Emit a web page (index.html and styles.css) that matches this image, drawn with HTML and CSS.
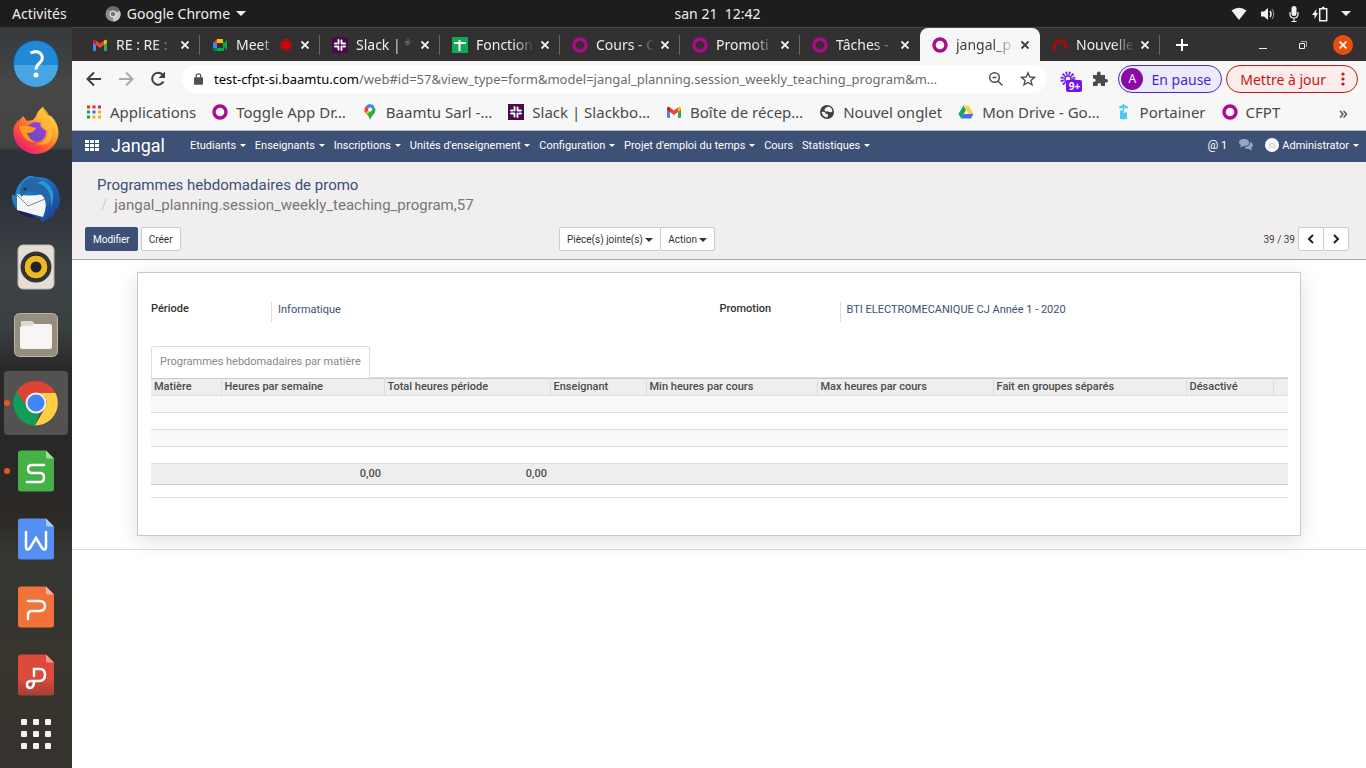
FILE: index.html
```html
<!DOCTYPE html>
<html lang="fr">
<head>
    <meta charset="UTF-8" />
    <title>jangal_planning.session_weekly_teaching_program,57</title>
    <link rel="stylesheet" href="styles.css">
</head>
<body>
<!-- Shared icons -->
<svg class="sprite" aria-hidden="true">
    <symbol id="i-close" viewBox="0 0 10 10"><path d="M1.5 1.5l7 7M8.500 1.500l-7 7" stroke="currentColor" stroke-width="1.8" fill="none" /></symbol>
    <symbol id="i-ring" viewBox="0 0 16 16"><circle cx="8" cy="8" r="6" fill="none" stroke="#ad0b8c" stroke-width="3.400" /></symbol>
    <symbol id="i-slack" viewBox="0 0 16 16">
        <path fill="#4a0a4b" d="M0 0h16v16H0z" />
        <g stroke="#fff" stroke-width="1.900" stroke-linecap="round"><path d="M6.500 3v3.500M3 6.500h1.500M9.500 3.500V6M9.500 6.500H13M9.500 13V9.500M13 9.500h-1.500M3 9.500h3.500M6.500 12.500V11" /></g>
    </symbol>
    <symbol id="i-gmail" viewBox="0 0 16 16">
        <path fill="#4285f4" d="M1 4.500V13a1 1 0 0 0 1 1h2V7z" />
        <path fill="#34a853" d="M15 4.500V13a1 1 0 0 1-1 1h-2V7z" />
        <path fill="#ea4335" d="M4 3.500L8 6.500l4-3V8l-4 3-4-3z" />
        <path fill="#c5221f" d="M1 4.500C1 2.500 3 2 4 3.500V8L1 5.500z" />
        <path fill="#fbbc04" d="M15 4.500C15 2.500 13 2 12 3.500V8l3-2.500z" />
    </symbol>
</svg>

<header class="topbar">
    <div class="topbar-left">
        <button class="plain">Activités</button>
        <button class="plain topbar-app">
            <svg width="16" height="16" viewBox="0 0 16 16"><circle cx="8" cy="8" r="7.500" fill="#8d8d8d" /><path d="M8 8L15 5a7.500 7.500 0 0 1-7 10.500z" fill="#c9c9c9" /><path d="M1.500 4A7.500 7.500 0 0 1 15 5H8z" fill="#6d6d6d" /><circle cx="8" cy="8" r="3.500" fill="#ddd" /><circle cx="8" cy="8" r="2.300" fill="#777" /></svg>
            Google Chrome
            <span class="caret caret-big"></span>
        </button>
    </div>
    <button class="plain topbar-clock">san 21&nbsp; 12:42</button>
    <div class="topbar-right">
        <svg width="16" height="16" viewBox="0 0 16 16"><path fill="#f2f2f2" d="M.5 4.500Q8-1 15.500 4.500L8 14z" /></svg>
        <svg width="16" height="16" viewBox="0 0 16 16"><path fill="#f2f2f2" d="M1 5.500h3L8 2v12l-4-3.500H1z" /><path d="M10 5q2 3 0 6" stroke="#f2f2f2" stroke-width="1.500" fill="none" /><path d="M12 3q3.500 5 0 10" stroke="#999" fill="none" /></svg>
        <svg width="10" height="16" viewBox="0 0 10 16"><rect x="2.500" y="0" width="5" height="10" rx="2.500" fill="#f2f2f2" /><path d="M1 6v2q0 4 4 4t4-4V6M5 12v4M2.500 15.500h5" stroke="#f2f2f2" stroke-width="1.200" fill="none" /></svg>
        <svg width="16" height="16" viewBox="0 0 16 16"><path fill="#f2f2f2" d="M4.500 3L0 9h2.500v4L6 7H4z" /><path d="M7.700 2.700h7v12h-7zM10 1.500h2.500" stroke="#f2f2f2" stroke-width="1.500" fill="none" /></svg>
        <span class="caret caret-big"></span>
    </div>
</header>

<div class="desktop">
    <nav class="dock" aria-label="Applications">
        <a href="#" class="dock-item" title="Aide">
            <svg viewBox="0 0 48 48"><circle cx="24" cy="24" r="22.500" fill="#2288d8" stroke="#1a568a" /><path d="M2 26h44a22 22 0 0 1-44 0z" fill="#48a5e4" /><path d="M18.500 14q6-3 10 .5 4 4.500-.5 9-4 3.500-4 7" stroke="#fff" stroke-width="3" fill="none" /><circle cx="24" cy="36" r="2.500" fill="#fff" /></svg>
        </a>
        <a href="#" class="dock-item" title="Firefox">
            <svg viewBox="0 0 48 48">
                <defs>
                    <linearGradient id="fx" x1="1" y1="0" x2=".2" y2="1"><stop offset="0" stop-color="#fff14a" /><stop offset=".4" stop-color="#ffa62e" /><stop offset=".7" stop-color="#ff5038" /><stop offset="1" stop-color="#e31587" /></linearGradient>
                    <linearGradient id="fxg" x1="1" y1="0" x2="0" y2="1"><stop offset="0" stop-color="#a53be8" /><stop offset="1" stop-color="#5a50b0" /></linearGradient>
                </defs>
                <path fill="url(#fx)" d="M11 9l4 5 6-1 3-4q2-6 7-9 1 6 5 9 2-1 3 0 8 8 7.500 18A22.500 22.500 0 0 1 24 47 22.500 22.500 0 0 1 2 19l3-4v-2q1 0 1 2z" />
                <circle cx="24" cy="25" r="10" fill="url(#fxg)" />
                <path fill="#ffbd38" d="M24 13q6-3 9 3-4-1-5 2 5 8 9 4-2 14-13 15 16 4 17-13Q41 10 31 0q-3 3-7 13z" opacity=".8" />
                <path fill="#ff9a20" d="M7 19q8-1 17 2-2 5-9 5 2 7 9 9-13 1-17-16z" />
            </svg>
        </a>
        <a href="#" class="dock-item" title="Thunderbird">
            <svg viewBox="0 0 48 48">
                <defs><linearGradient id="tb" x1="0" y1="0" x2="1" y2="1"><stop offset="0" stop-color="#2b9bd8" /><stop offset=".5" stop-color="#1f66bd" /><stop offset="1" stop-color="#1c3c8c" /></linearGradient></defs>
                <path fill="url(#tb)" d="M10 6q8-8 13-4Q45 1 48 23q0 8-3 12l-1-2q-1 6-5 10l-1-2q-2 4-8 6l-2-4-18-4Q-1 31 0 19l3 2q1-9 7-15z" />
                <path fill="#2a1860" d="M5 34q6 10 19 8l-6-3z" />
                <path fill="#f4f5f7" d="M5 19q10 3 27 0 4 12-1 23L5 35z" />
                <path d="M5 20l11 11 17-7" stroke="#888" stroke-width="1" fill="none" />
                <path fill="#2466ac" d="M9 22Q5 8 18 3q17-2 22 20l-6 10q1-12-8-15-8-3-14 1z" />
                <path fill="#2a9bd0" d="M24 8q16 2 15 24 7-18-8-26z" />
                <circle cx="13" cy="14" r="1.500" fill="#333" />
            </svg>
        </a>
        <a href="#" class="dock-item" title="Rhythmbox">
            <svg viewBox="0 0 48 48"><rect x="6" y="2" width="36" height="44" rx="5" fill="#e4ded6" stroke="#bdb5aa" /><circle cx="24" cy="24" r="15.500" fill="#36343b" /><circle cx="24" cy="24" r="12" fill="#ecb91f" stroke="#171717" /><circle cx="24" cy="24" r="5.500" fill="#222" /></svg>
        </a>
        <a href="#" class="dock-item" title="Fichiers">
            <svg viewBox="0 0 48 48"><rect x="2.500" y="2.500" width="43" height="43" rx="5" fill="#968e7e" stroke="#bdb5a3" /><path fill="#ded8cb" d="M9 10h11l4 4v6H9z" /><path fill="#f7f6f4" d="M8 17q0-2 2-2h9l3-2h16q2 0 2 2v21q0 2-2 2H10q-2 0-2-2z" /></svg>
        </a>
        <a href="#" class="dock-item active running" title="Google Chrome">
            <svg viewBox="0 0 48 48"><path fill="#dd4437" d="M4.500 12.500A22.500 22.500 0 0 1 43.500 14H24a10 10 0 0 0-9 14z" /><path fill="#109d58" d="M4.500 12.500L15.500 29A10 10 0 0 0 28 33l-5 13.500A22.500 22.500 0 0 1 4.500 12.500z" /><path fill="#ffcd41" d="M43.500 14A22.500 22.500 0 0 1 23 46.500L33 29a10 10 0 0 0-6-15z" /><circle cx="24" cy="24" r="10.500" fill="#f1f1f1" /><circle cx="24" cy="24" r="8.500" fill="#4285f4" /></svg>
        </a>
        <a href="#" class="dock-item running" title="WPS Spreadsheets">
            <svg viewBox="0 0 48 48"><path fill="#46b147" d="M9 3.500h25l8 8V42q0 2.500-3 2.500H9Q6 44.500 6 42V6q0-2.500 3-2.500z" /><path fill="#a5d9a2" d="M34 3.500l8 8h-6q-2 0-2-2z" /><path d="M32 18H20q-4 0-4 4t4 4h8q4 0 4 4.500t-4 4.500H15" stroke="#fff" stroke-width="2.500" stroke-linecap="round" fill="none" /></svg>
        </a>
        <a href="#" class="dock-item" title="WPS Writer">
            <svg viewBox="0 0 48 48"><path fill="#558ff2" d="M9 3.500h25l8 8V42q0 2.500-3 2.500H9Q6 44.500 6 42V6q0-2.500 3-2.500z" /><path fill="#abcafa" d="M34 3.500l8 8h-6q-2 0-2-2z" /><path d="M14 17v14q0 6 4 2l6-10 6 10q4 4 4-2V17" stroke="#fff" stroke-width="2.500" stroke-linecap="round" fill="none" /></svg>
        </a>
        <a href="#" class="dock-item" title="WPS Presentation">
            <svg viewBox="0 0 48 48"><path fill="#f37239" d="M9 3.500h25l8 8V42q0 2.500-3 2.500H9Q6 44.500 6 42V6q0-2.500 3-2.500z" /><path fill="#f9b79a" d="M34 3.500l8 8h-6q-2 0-2-2z" /><path d="M16 18h11q6 0 6 5t-6 5h-7q-4 0-4 4v4" stroke="#fff" stroke-width="2.500" stroke-linecap="round" fill="none" /></svg>
        </a>
        <a href="#" class="dock-item" title="WPS PDF">
            <svg viewBox="0 0 48 48">
                <defs><linearGradient id="pdf" x1="0" y1="0" x2="0" y2="1"><stop offset=".6" stop-color="#db4a3b" /><stop offset="1" stop-color="#a33f35" /></linearGradient></defs>
                <path fill="url(#pdf)" d="M9 3.500h25l8 8V42q0 2.500-3 2.500H9Q6 44.500 6 42V6q0-2.500 3-2.500z" /><path fill="#ee988e" d="M34 3.500l8 8h-6q-2 0-2-2z" /><path d="M22 25v-7h6q5 0 5 6t-6 6h-8q-4 0-4 3.500t3 3.500q4 0 4-7" stroke="#fff" stroke-width="2.500" stroke-linecap="round" fill="none" />
            </svg>
        </a>
        <a href="#" class="dock-item dock-grid" title="Afficher les applications">
            <svg viewBox="0 0 30 30" fill="#f1f1ee"><rect width="6" height="6" rx="1" /><rect x="12" width="6" height="6" rx="1" /><rect x="24" width="6" height="6" rx="1" /><rect y="12" width="6" height="6" rx="1" /><rect x="12" y="12" width="6" height="6" rx="1" /><rect x="24" y="12" width="6" height="6" rx="1" /><rect y="24" width="6" height="6" rx="1" /><rect x="12" y="24" width="6" height="6" rx="1" /><rect x="24" y="24" width="6" height="6" rx="1" /></svg>
        </a>
    </nav>

    <div class="browser">
        <div class="tabs">
            <div class="tab"><svg class="ico"><use href="#i-gmail" /></svg><span class="tab-title">RE : RE :</span><button class="tab-close" aria-label="Fermer"><svg><use href="#i-close" /></svg></button></div>
            <div class="tab"><svg class="ico" viewBox="0 0 16 16"><path fill="#fbbc04" d="M5 2h6v4H5z" /><path fill="#ea4335" d="M5 2v4H1z" /><path fill="#4285f4" d="M1 6h4v5H1z" /><path fill="#00832d" d="M1 11h4v3H2q-1 0-1-1z" /><path fill="#00ac47" d="M5 11h6V5q1 0 1 1l3-3v10l-3-3v3q0 1-1 1H5z" /></svg><span class="tab-title">Meet</span><svg class="rec" viewBox="0 0 12 12"><circle cx="6" cy="6" r="5.500" fill="none" stroke="#d00" /><circle cx="6" cy="6" r="4" fill="#e00000" /></svg><button class="tab-close" aria-label="Fermer"><svg><use href="#i-close" /></svg></button></div>
            <div class="tab"><svg class="ico"><use href="#i-slack" /></svg><span class="tab-title">Slack | *</span><button class="tab-close" aria-label="Fermer"><svg><use href="#i-close" /></svg></button></div>
            <div class="tab"><svg class="ico" viewBox="0 0 16 16"><rect width="16" height="16" rx="1" fill="#0fa958" /><path d="M2 6h12M7.500 3v11" stroke="#fff" stroke-width="2" /></svg><span class="tab-title">Fonction</span><button class="tab-close" aria-label="Fermer"><svg><use href="#i-close" /></svg></button></div>
            <div class="tab"><svg class="ico"><use href="#i-ring" /></svg><span class="tab-title">Cours - C</span><button class="tab-close" aria-label="Fermer"><svg><use href="#i-close" /></svg></button></div>
            <div class="tab"><svg class="ico"><use href="#i-ring" /></svg><span class="tab-title">Promoti</span><button class="tab-close" aria-label="Fermer"><svg><use href="#i-close" /></svg></button></div>
            <div class="tab last"><svg class="ico"><use href="#i-ring" /></svg><span class="tab-title">Tâches -</span><button class="tab-close" aria-label="Fermer"><svg><use href="#i-close" /></svg></button></div>
            <div class="tab current"><svg class="ico"><use href="#i-ring" /></svg><span class="tab-title">jangal_p</span><button class="tab-close" aria-label="Fermer"><svg><use href="#i-close" /></svg></button></div>
            <div class="tab"><svg class="ico" viewBox="0 0 16 16"><path d="M2 13V10a6 6 0 0 1 12 0v3" fill="none" stroke="#b40606" stroke-width="3.500" stroke-dasharray="3.200 .8" /></svg><span class="tab-title">Nouvelle</span><button class="tab-close" aria-label="Fermer"><svg><use href="#i-close" /></svg></button></div>
            <button class="new-tab" aria-label="Nouvel onglet"><svg viewBox="0 0 12 12"><path d="M6 0v12M0 6h12" stroke="#fff" stroke-width="2" /></svg></button>
            <div class="window-buttons">
                <button aria-label="Réduire"><svg width="10" height="10" viewBox="0 0 10 10"><path d="M1 8.500h8" stroke="#eee" /></svg></button>
                <button aria-label="Restaurer"><svg width="10" height="10" viewBox="0 0 10 10"><path d="M1.500 3.500h5v5h-5z" stroke="#eee" fill="none" /><path d="M3 1.500h5.500V7" stroke="#aaa" fill="none" /></svg></button>
                <button class="window-close" aria-label="Fermer"><svg width="10" height="10"><use href="#i-close" /></svg></button>
            </div>
        </div>

        <div class="toolbar">
            <button class="tool" aria-label="Retour"><svg viewBox="0 0 16 16"><path d="M15 8H2M8 1.500L1.500 8 8 14.500" stroke="#3c4043" stroke-width="2" fill="none" /></svg></button>
            <button class="tool" aria-label="Avancer"><svg viewBox="0 0 16 16"><path d="M1 8h13M8 1.500L14.500 8 8 14.500" stroke="#aaa" stroke-width="2" fill="none" /></svg></button>
            <button class="tool" aria-label="Actualiser"><svg viewBox="0 0 16 16"><path d="M13.500 10.500a6 6 0 1 1-1-7L14 5" stroke="#3c4043" stroke-width="2" fill="none" /><path d="M15 .5V7H8.500z" fill="#3c4043" /></svg></button>
            <div class="omnibox">
                <svg class="lock" viewBox="0 0 10 13"><path fill="#4d5156" d="M1 4.500h8q1 0 1 1V12q0 1-1 1H1q-1 0-1-1V5.500q0-1 1-1z" /><path d="M2.500 5V3q0-2.300 2.500-2.300T7.500 3v2" stroke="#4d5156" stroke-width="1.400" fill="none" /></svg>
                <label for="url">test-cfpt-si.baamtu.com</label>
                <input id="url" type="text" value="/web#id=57&amp;view_type=form&amp;model=jangal_planning.session_weekly_teaching_program&amp;m…" />
                <button class="in-box" aria-label="Zoom"><svg viewBox="0 0 16 16"><circle cx="6.500" cy="6.500" r="4.800" stroke="#4d5156" stroke-width="1.500" fill="none" /><path d="M10 10l4.500 4.500M4.500 6.500h4" stroke="#4d5156" stroke-width="1.500" /></svg></button>
                <button class="in-box" aria-label="Favori"><svg viewBox="0 0 16 16"><path d="M8 1.800l1.800 4.200 4.600.4-3.500 3 1.100 4.500L8 11.500l-4 2.400 1.100-4.500-3.500-3 4.600-.4z" stroke="#4d5156" stroke-width="1.400" fill="none" /></svg></button>
            </div>
            <button class="ext" aria-label="Extension"><svg viewBox="0 0 16 16"><circle cx="8" cy="8" r="5.500" fill="none" stroke="#7a22f0" stroke-width="4" stroke-dasharray="1.700 1.180" /><circle cx="8" cy="8" r="3" fill="none" stroke="#7a22f0" stroke-width="1.500" /></svg><span class="ext-badge">9+</span></button>
            <button class="ext" aria-label="Extensions"><svg viewBox="0 0 16 16"><path fill="#4a4a4a" d="M1 4h4q-.5-3.500 1.800-3.500T8.500 4H13v4q3-.5 3 1.700T13 11.500V15H9q.2-3-1.700-3T5.500 15H1v-4q2.800 0 2.800-1.700T1 7.500z" /></svg></button>
            <button class="profile"><span class="profile-pic">A</span>En pause</button>
            <button class="update">Mettre à jour<svg viewBox="0 0 4 14" fill="#c5160f"><circle cx="2" cy="2" r="1.600" /><circle cx="2" cy="7" r="1.600" /><circle cx="2" cy="12" r="1.600" /></svg></button>
        </div>

        <div class="bookmarks">
            <a href="#"><svg class="ico" viewBox="0 0 16 16"><path fill="#ea2a1f" d="M1 1.500h3v3H1zM6.500 1.500h3v3h-3zM12 1.500h3v3h-3z" /><path fill="#12a150" d="M1 6.500h3v3H1zM1 11.500h3v3H1z" /><path fill="#4460e8" d="M6.500 6.500h3v3h-3z" /><path fill="#f5b400" d="M12 6.500h3v3h-3zM6.500 11.500h3v3h-3zM12 11.500h3v3h-3z" /></svg>Applications</a>
            <a href="#"><svg class="ico"><use href="#i-ring" /></svg>Toggle App Dr…</a>
            <a href="#"><svg class="ico" viewBox="0 0 16 16"><path fill="#34a853" d="M3.500 9L12 3q1.500 1 1.500 3 0 2.500-2.500 5-2 2-3 5-1.500-5-4.500-7z" /><path fill="#fbbc04" d="M3 7.500l5-4 2 3-5.500 4q-1.500-1.500-1.500-3z" /><path fill="#ea4335" d="M4 2l4 3-5 4Q1.500 5 4 2z" /><path fill="#4285f4" d="M4 2q2-2 4-2 3 0 4.500 2.500L8 6z" /><circle cx="8" cy="5.500" r="2" fill="#fff" /></svg>Baamtu Sarl -…</a>
            <a href="#"><svg class="ico"><use href="#i-slack" /></svg>Slack | Slackbo…</a>
            <a href="#"><svg class="ico"><use href="#i-gmail" /></svg>Boîte de récep…</a>
            <a href="#"><svg class="ico" viewBox="0 0 16 16"><circle cx="8" cy="8" r="7" fill="#3c4043" /><path fill="#f7f7f7" d="M2.500 8q3-1 4 1t2 1 0 3.500Q3.500 13 2.500 8zM8 3q4-1 5.500 4-1 2-3 1t-3.500-.5T5.500 5z" /></svg>Nouvel onglet</a>
            <a href="#"><svg class="ico" viewBox="0 0 16 16"><path fill="#11a861" d="M5.500 1.500L8 6 3 14.500.5 10z" /><path fill="#ffcf48" d="M5.500 1.500h5l5 8.500h-5z" /><path fill="#4d6bf0" d="M5.500 10h10L13 14.500H3z" /></svg>Mon Drive - Go…</a>
            <a href="#"><svg class="ico" viewBox="0 0 16 16"><path d="M3 3.500h9M7.500 0v8M3 3.500L7.500 1 12 3.500" stroke="#4cc9f0" stroke-width="1.300" fill="none" /><path fill="#4cc9f0" d="M4 6.500h3v2h4v6q-4 2-7 0z" /></svg>Portainer</a>
            <a href="#"><svg class="ico"><use href="#i-ring" /></svg>CFPT</a>
            <button class="more" aria-label="Autres favoris">»</button>
        </div>

        <nav class="navbar">
            <a href="#" class="apps" aria-label="Applications"><svg viewBox="0 0 14 11" fill="#fff"><path d="M0 0h4v3H0zM5 0h4v3H5zM10 0h4v3h-4zM0 4h4v3H0zM5 4h4v3H5zM10 4h4v3h-4zM0 8h4v3H0zM5 8h4v3H5zM10 8h4v3h-4z" /></svg></a>
            <a href="#" class="brand">Jangal</a>
            <div class="menu">
                <a href="#">Etudiants <span class="caret"></span></a>
                <a href="#">Enseignants <span class="caret"></span></a>
                <a href="#">Inscriptions <span class="caret"></span></a>
                <a href="#">Unités d'enseignement <span class="caret"></span></a>
                <a href="#">Configuration <span class="caret"></span></a>
                <a href="#">Projet d'emploi du temps <span class="caret"></span></a>
                <a href="#">Cours</a>
                <a href="#">Statistiques <span class="caret"></span></a>
            </div>
            <div class="systray">
                <a href="#"><span class="at">@</span> 1</a>
                <a href="#" aria-label="Discussions"><svg width="14" height="12" viewBox="0 0 14 12" fill="#9aa6bd"><path d="M5 0q5 0 5 3.500T5 7L1 8.500 2 6Q0 5 0 3.500 0 0 5 0z" /><path d="M11 3q3 .8 3 3t-2 3l1 2.500L9.500 10Q6 10 5 8q6 0 6-5z" /></svg></a>
                <a href="#" class="user"><svg width="14" height="14" viewBox="0 0 14 14"><circle cx="7" cy="7" r="7" fill="#fff" /><rect x="3.500" y="5" width="7" height="5" rx="1" fill="#ddd" /><circle cx="7" cy="7.500" r="1.500" fill="#f6f6f6" /></svg>Administrator <span class="caret"></span></a>
            </div>
        </nav>

        <div class="control-panel">
            <ol class="breadcrumb">
                <li><a href="#">Programmes hebdomadaires de promo</a></li>
                <li class="active">jangal_planning.session_weekly_teaching_program,57</li>
            </ol>
            <div class="cp-row">
                <div class="cp-buttons">
                    <button class="btn btn-primary">Modifier</button>
                    <button class="btn">Créer</button>
                </div>
                <div class="cp-right">
                    <div class="btn-group">
                        <button class="btn">Pièce(s) jointe(s) <span class="caret"></span></button>
                        <button class="btn">Action <span class="caret"></span></button>
                    </div>
                    <div class="pager">
                        <span>39 / 39</span>
                        <div class="btn-group">
                            <button class="btn btn-icon" aria-label="Précédent"><svg viewBox="0 0 8 10"><path d="M6 1L2 5l4 4" stroke="#222" stroke-width="2" fill="none" /></svg></button>
                            <button class="btn btn-icon" aria-label="Suivant"><svg viewBox="0 0 8 10"><path d="M2 1l4 4-4 4" stroke="#222" stroke-width="2" fill="none" /></svg></button>
                        </div>
                    </div>
                </div>
            </div>
        </div>

        <main class="form-view">
            <div class="sheet">
                <dl class="group">
                    <div class="field"><dt>Période</dt><dd><a href="#">Informatique</a></dd></div>
                    <div class="field"><dt>Promotion</dt><dd><a href="#">BTI ELECTROMECANIQUE CJ Année 1 - 2020</a></dd></div>
                </dl>
                <div class="notebook">
                    <a href="#" class="notebook-tab">Programmes hebdomadaires par matière</a>
                </div>
                <div class="notebook-page">
                    <table class="list">
                        <colgroup>
                            <col class="c-matiere"><col class="c-heures"><col class="c-total"><col class="c-enseignant"><col class="c-min"><col class="c-max"><col class="c-groupes"><col class="c-desactive"><col class="c-delete">
                        </colgroup>
                        <thead>
                            <tr><th>Matière</th><th>Heures par semaine</th><th>Total heures période</th><th>Enseignant</th><th>Min heures par cours</th><th>Max heures par cours</th><th>Fait en groupes séparés</th><th>Désactivé</th><th></th></tr>
                        </thead>
                        <tbody>
                            <tr><td colspan="9"></td></tr>
                            <tr><td colspan="9"></td></tr>
                            <tr><td colspan="9"></td></tr>
                            <tr><td colspan="9"></td></tr>
                        </tbody>
                        <tfoot>
                            <tr><td></td><td>0,00</td><td>0,00</td><td></td><td></td><td></td><td></td><td></td><td></td></tr>
                        </tfoot>
                    </table>
                </div>
            </div>
        </main>
    </div>
</div>
</body>
</html>
```
FILE: styles.css
```css
* {
    box-sizing: border-box;
}

body {
    margin: 0;
    min-height: 100vh;
    display: flex;
    flex-direction: column;
    font-family: 'Noto Sans', 'Open Sans', sans-serif;
    font-size: 14px;
    background: #fff;
}

a {
    color: inherit;
    text-decoration: none;
}

button {
    margin: 0;
    padding: 0;
    border: none;
    background: none;
    color: inherit;
    font: inherit;
    white-space: nowrap;
    cursor: pointer;
}

svg {
    display: block;
    flex: none;
}

.sprite {
    display: none;
}

.ico {
    width: 16px;
    height: 16px;
}

.caret {
    display: inline-block;
    margin-left: 1px;
    vertical-align: middle;
    border-top: 3px solid;
    border-left: 3px solid transparent;
    border-right: 3px solid transparent;
}

.caret-big {
    margin: 0;
    border-width: 5px 5px 0;
}

/* Desktop top bar */
.topbar {
    display: flex;
    align-items: center;
    height: 27px;
    padding: 0 15px 0 12px;
    background: #1d1d1d;
    color: #eee;
}

.topbar-left,
.topbar-right {
    flex: 1;
    display: flex;
    align-items: center;
}

.topbar-left {
    gap: 38px;
}

.topbar-right {
    justify-content: flex-end;
    gap: 13px;
}

.topbar-app {
    display: flex;
    align-items: center;
    gap: 6px;
}

.topbar-clock {
    padding-left: 72px;
}

.desktop {
    flex: 1;
    display: flex;
}

/* Dock */
.dock {
    flex: none;
    width: 72px;
    display: flex;
    flex-direction: column;
    gap: 4px;
    padding: 4px;
    background: linear-gradient(180deg, #33393d 0, #474846 60px, #444542 120px, #2c3238 124px, #2c3238 170px, #3d4346 240px, #3a3f42 300px, #292929 340px, #282828 420px, #2c2926 490px, #373734 530px, #34342f 590px, #38342e 620px, #36322d 100%);
}

.dock-item {
    position: relative;
    display: flex;
    align-items: center;
    justify-content: center;
    height: 64px;
    border-radius: 4px;
}

.dock-item svg {
    width: 48px;
    height: 48px;
}

.dock-item.active {
    background: #535250;
}

.dock-item.running::before {
    content: '';
    position: absolute;
    left: 0;
    width: 6px;
    height: 6px;
    border-radius: 50%;
    background: #e95420;
}

.dock-grid {
    height: 46px;
}

.dock-item.dock-grid svg {
    width: 30px;
    height: 30px;
}

/* Browser */
.browser {
    flex: 1;
    min-width: 0;
    display: flex;
    flex-direction: column;
}

.tabs {
    display: flex;
    height: 34px;
    padding-left: 8px;
    border-top: 1px solid #4a4848;
    background: #333031;
    color: #eee;
}

.tab {
    position: relative;
    display: flex;
    align-items: center;
    flex: 0 1 120px;
    min-width: 0;
    gap: 8px;
    padding: 0 10px 0 12px;
}

.tab:not(.last):not(.current)::after {
    content: '';
    position: absolute;
    right: 0;
    height: 20px;
    border-right: 1px solid #666;
}

.tab-title {
    flex: 1;
    margin-right: -6px;
    overflow: hidden;
    white-space: nowrap;
    -webkit-mask-image: linear-gradient(90deg, #000 60%, transparent 95%);
    mask-image: linear-gradient(90deg, #000 60%, transparent 95%);
}

.rec {
    width: 12px;
    height: 12px;
}

.tab-close svg {
    width: 10px;
    height: 10px;
}

.tab.current {
    border-radius: 8px 8px 0 0;
    background: #f7f7f7;
    color: #3c4043;
}

.new-tab {
    padding: 0 16px;
}

.new-tab svg {
    width: 12px;
    height: 12px;
}

.window-buttons {
    display: flex;
    align-items: center;
    gap: 30px;
    margin-left: auto;
    padding-right: 13px;
}

.window-close {
    width: 20px;
    height: 20px;
    margin-left: -5px;
    padding: 5px;
    border-radius: 50%;
    background: #ee4c0a;
}

.toolbar {
    display: flex;
    align-items: center;
    height: 36px;
    padding: 0 8px 0 14px;
    background: #f7f7f7;
}

.tool {
    margin-right: 16px;
}

.tool svg {
    width: 16px;
    height: 16px;
}

.omnibox {
    flex: 1;
    min-width: 0;
    display: flex;
    align-items: center;
    height: 28px;
    margin-right: 14px;
    padding: 0 10px 0 12px;
    border-radius: 14px;
    background: #fff;
    font-size: 13px;
}

.omnibox label {
    color: #000;
}

.omnibox input {
    flex: 1;
    min-width: 0;
    padding: 0;
    border: none;
    outline: none;
    background: none;
    color: #6b6b6b;
    font: inherit;
}

.lock {
    width: 9px;
    height: 12px;
    margin-right: 11px;
}

.in-box {
    margin-left: 16px;
}

.in-box svg,
.ext svg {
    width: 16px;
    height: 16px;
}

.ext {
    position: relative;
    margin-right: 16px;
}

.ext + .ext {
    margin-right: 10px;
}

.ext-badge {
    position: absolute;
    left: 6px;
    top: 9px;
    width: 16px;
    border-radius: 2px;
    background: #7510ee;
    color: #fff;
    font-size: 10px;
    font-weight: 700;
    line-height: 12px;
    text-align: center;
}

.profile,
.update {
    display: flex;
    align-items: center;
    height: 28px;
    border: 1px solid #4c23d3;
    border-radius: 14px;
}

.profile {
    gap: 8px;
    margin-right: 4px;
    padding: 0 10px 0 2px;
    background: #ebecfb;
    color: #4c23d3;
}

.profile-pic {
    width: 22px;
    border-radius: 50%;
    background: #8a0aa5;
    color: #fff;
    font-size: 12px;
    line-height: 22px;
}

.update {
    gap: 15px;
    padding: 0 12px 0 13px;
    border-color: #c5160f;
    background: #fcecec;
    color: #c5160f;
}

.update svg {
    width: 4px;
    height: 14px;
}

.bookmarks {
    display: flex;
    align-items: center;
    gap: 16px;
    height: 34px;
    padding: 0 18px 4px 14px;
    border-bottom: 1px solid #b8b8b8;
    background: #f7f7f7;
    color: #4a4a4a;
    font-size: 15px;
}

.bookmarks a {
    display: flex;
    align-items: center;
    gap: 8px;
    white-space: nowrap;
}

.more {
    margin-left: auto;
    font-size: 18px;
}

/* Odoo top menu */
.navbar {
    display: flex;
    align-items: center;
    height: 31px;
    padding: 0 7px 3px 13px;
    background: #3d5075;
    color: #fff;
    font-family: Roboto, sans-serif;
    font-size: 11px;
}

.apps svg {
    width: 14px;
    height: 11px;
}

.brand {
    margin: 0 25px 0 12px;
    font-size: 18px;
}

.menu,
.systray {
    display: flex;
    align-items: center;
    white-space: nowrap;
}

.menu {
    gap: 9px;
}

.systray {
    gap: 12px;
    margin-left: auto;
}

.at {
    font-size: 12px;
}

.user {
    display: flex;
    align-items: center;
    gap: 3px;
}

/* Control panel */
.control-panel {
    padding: 13px 17px 8px 13px;
    border-bottom: 1px solid #a9a9a9;
    background: #f0eeee;
    font-family: Roboto, sans-serif;
}

.breadcrumb {
    margin: 0 0 12px;
    padding: 0 12px;
    list-style: none;
    color: #777;
    font-size: 15px;
    line-height: 20px;
}

.breadcrumb a {
    color: #3d5075;
}

.breadcrumb .active::before {
    content: '/';
    padding: 0 7px 0 4px;
    color: #ccc;
}

.cp-row {
    display: grid;
    grid-template-columns: 3fr 5fr;
}

.cp-buttons {
    display: flex;
    gap: 3px;
}

.cp-right {
    display: flex;
    justify-content: space-between;
}

.btn {
    height: 24px;
    padding: 0 7px;
    border: 1px solid #ccc;
    border-radius: 2px;
    background: #fff;
    color: #333;
    font-size: 10px;
}

.btn .caret {
    margin: 0;
    border-width: 4px 4px 0;
}

.btn-primary {
    border-color: #3d5075;
    background: #3d5075;
    color: #fff;
}

.btn-group {
    display: flex;
}

.btn-group .btn + .btn {
    margin-left: -1px;
}

.btn-icon {
    padding: 0 8px;
}

.btn-icon svg {
    width: 8px;
    height: 10px;
}

.pager {
    display: flex;
    align-items: center;
    gap: 3px;
    color: #444;
    font-size: 10px;
}

/* Form */
.form-view {
    padding: 12px 65px 13px;
    border-bottom: 1px solid #ddd;
    font-family: Roboto, sans-serif;
    font-size: 11px;
}

.sheet {
    padding: 29px 12px 37px 13px;
    border: 1px solid #c8c8d3;
    background: #fff;
    box-shadow: 0 5px 20px rgba(0, 0, 0, 0.13);
}

.group {
    display: grid;
    grid-template-columns: 1fr 1fr;
    margin: 0 0 24px;
}

.field {
    display: flex;
    line-height: 15px;
}

.field dt {
    width: 120px;
    color: #333;
    font-weight: 500;
    line-height: 13px;
}

.field dd {
    height: 20px;
    margin: 0;
    padding-left: 6px;
    border-left: 1px solid #ddd;
    color: #3d5075;
}

.notebook {
    display: flex;
    border-bottom: 1px solid #ddd;
}

.notebook-tab {
    margin-bottom: -1px;
    padding: 0 8px;
    border: 1px solid #ddd;
    border-bottom-color: #fff;
    border-radius: 3px 3px 0 0;
    color: #888;
    line-height: 30px;
}

.notebook-page {
    padding-bottom: 12px;
    border-bottom: 1px solid #ddd;
}

.list {
    width: 100%;
    table-layout: fixed;
    border-collapse: collapse;
    border-bottom: 1px solid #ccc;
    color: #4c4c4c;
}

.list th,
.list td {
    height: 17px;
    padding: 0 3px;
    border-top: 1px solid #ddd;
    line-height: 16px;
}

.list th {
    border-top-color: #ccc;
    border-right: 1px solid #ddd;
    text-align: left;
    font-weight: 500;
    white-space: nowrap;
}

.list th:last-child {
    border-right: none;
}

.list thead,
.list tfoot {
    background: #eee;
}

.list tbody tr:nth-child(odd) {
    background: #f9f9f9;
}

.list tfoot td {
    height: 21px;
    font-weight: 500;
    text-align: right;
}

.c-matiere { width: 70px; }
.c-heures { width: 163px; }
.c-total { width: 166px; }
.c-enseignant { width: 96px; }
.c-min { width: 171px; }
.c-max { width: 176px; }
.c-groupes { width: 193px; }
.c-desactive { width: 87px; }
.c-delete { width: 15px; }
```
